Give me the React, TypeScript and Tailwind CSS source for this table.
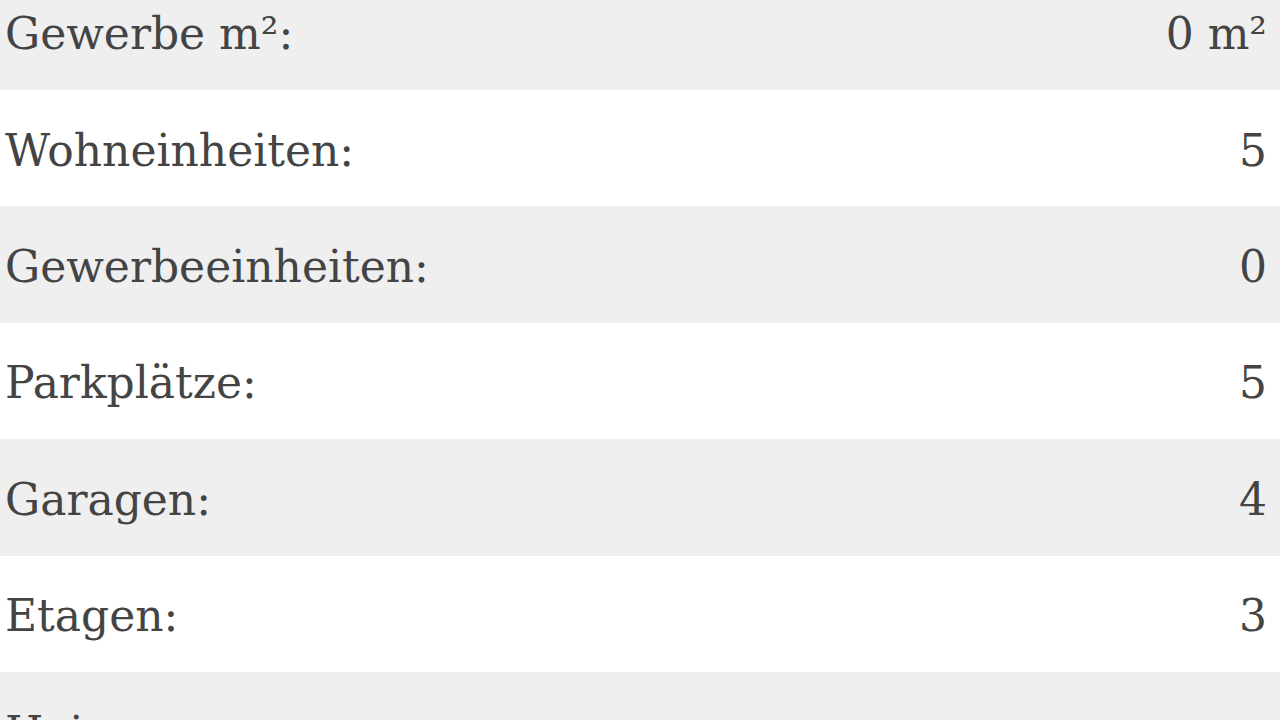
import React from 'react';

type Row = { label: string; value: string };

const rows: Row[] = [
  { label: 'Gewerbe m²:', value: '0 m²' },
  { label: 'Wohneinheiten:', value: '5' },
  { label: 'Gewerbeeinheiten:', value: '0' },
  { label: 'Parkplätze:', value: '5' },
  { label: 'Garagen:', value: '4' },
  { label: 'Etagen:', value: '3' },
  { label: 'Heizung:', value: 'neu' },
];

export default function App() {
  return (
    <div className="w-[1280px] h-[720px] overflow-hidden bg-white">
      <div className="-mt-[26.4px] flex flex-col font-['DejaVu_Serif',serif] text-[44px] text-[#444]">
        {rows.map((r, i) => (
          <div
            key={r.label}
            className={`h-[116.4px] flex items-center justify-between pl-[5px] pr-[13px] pt-[5px] ${
              i % 2 === 0 ? 'bg-[#efefef]' : 'bg-white'
            }`}
          >
            <span>{r.label}</span>
            <span>{r.value}</span>
          </div>
        ))}
      </div>
    </div>
  );
}
